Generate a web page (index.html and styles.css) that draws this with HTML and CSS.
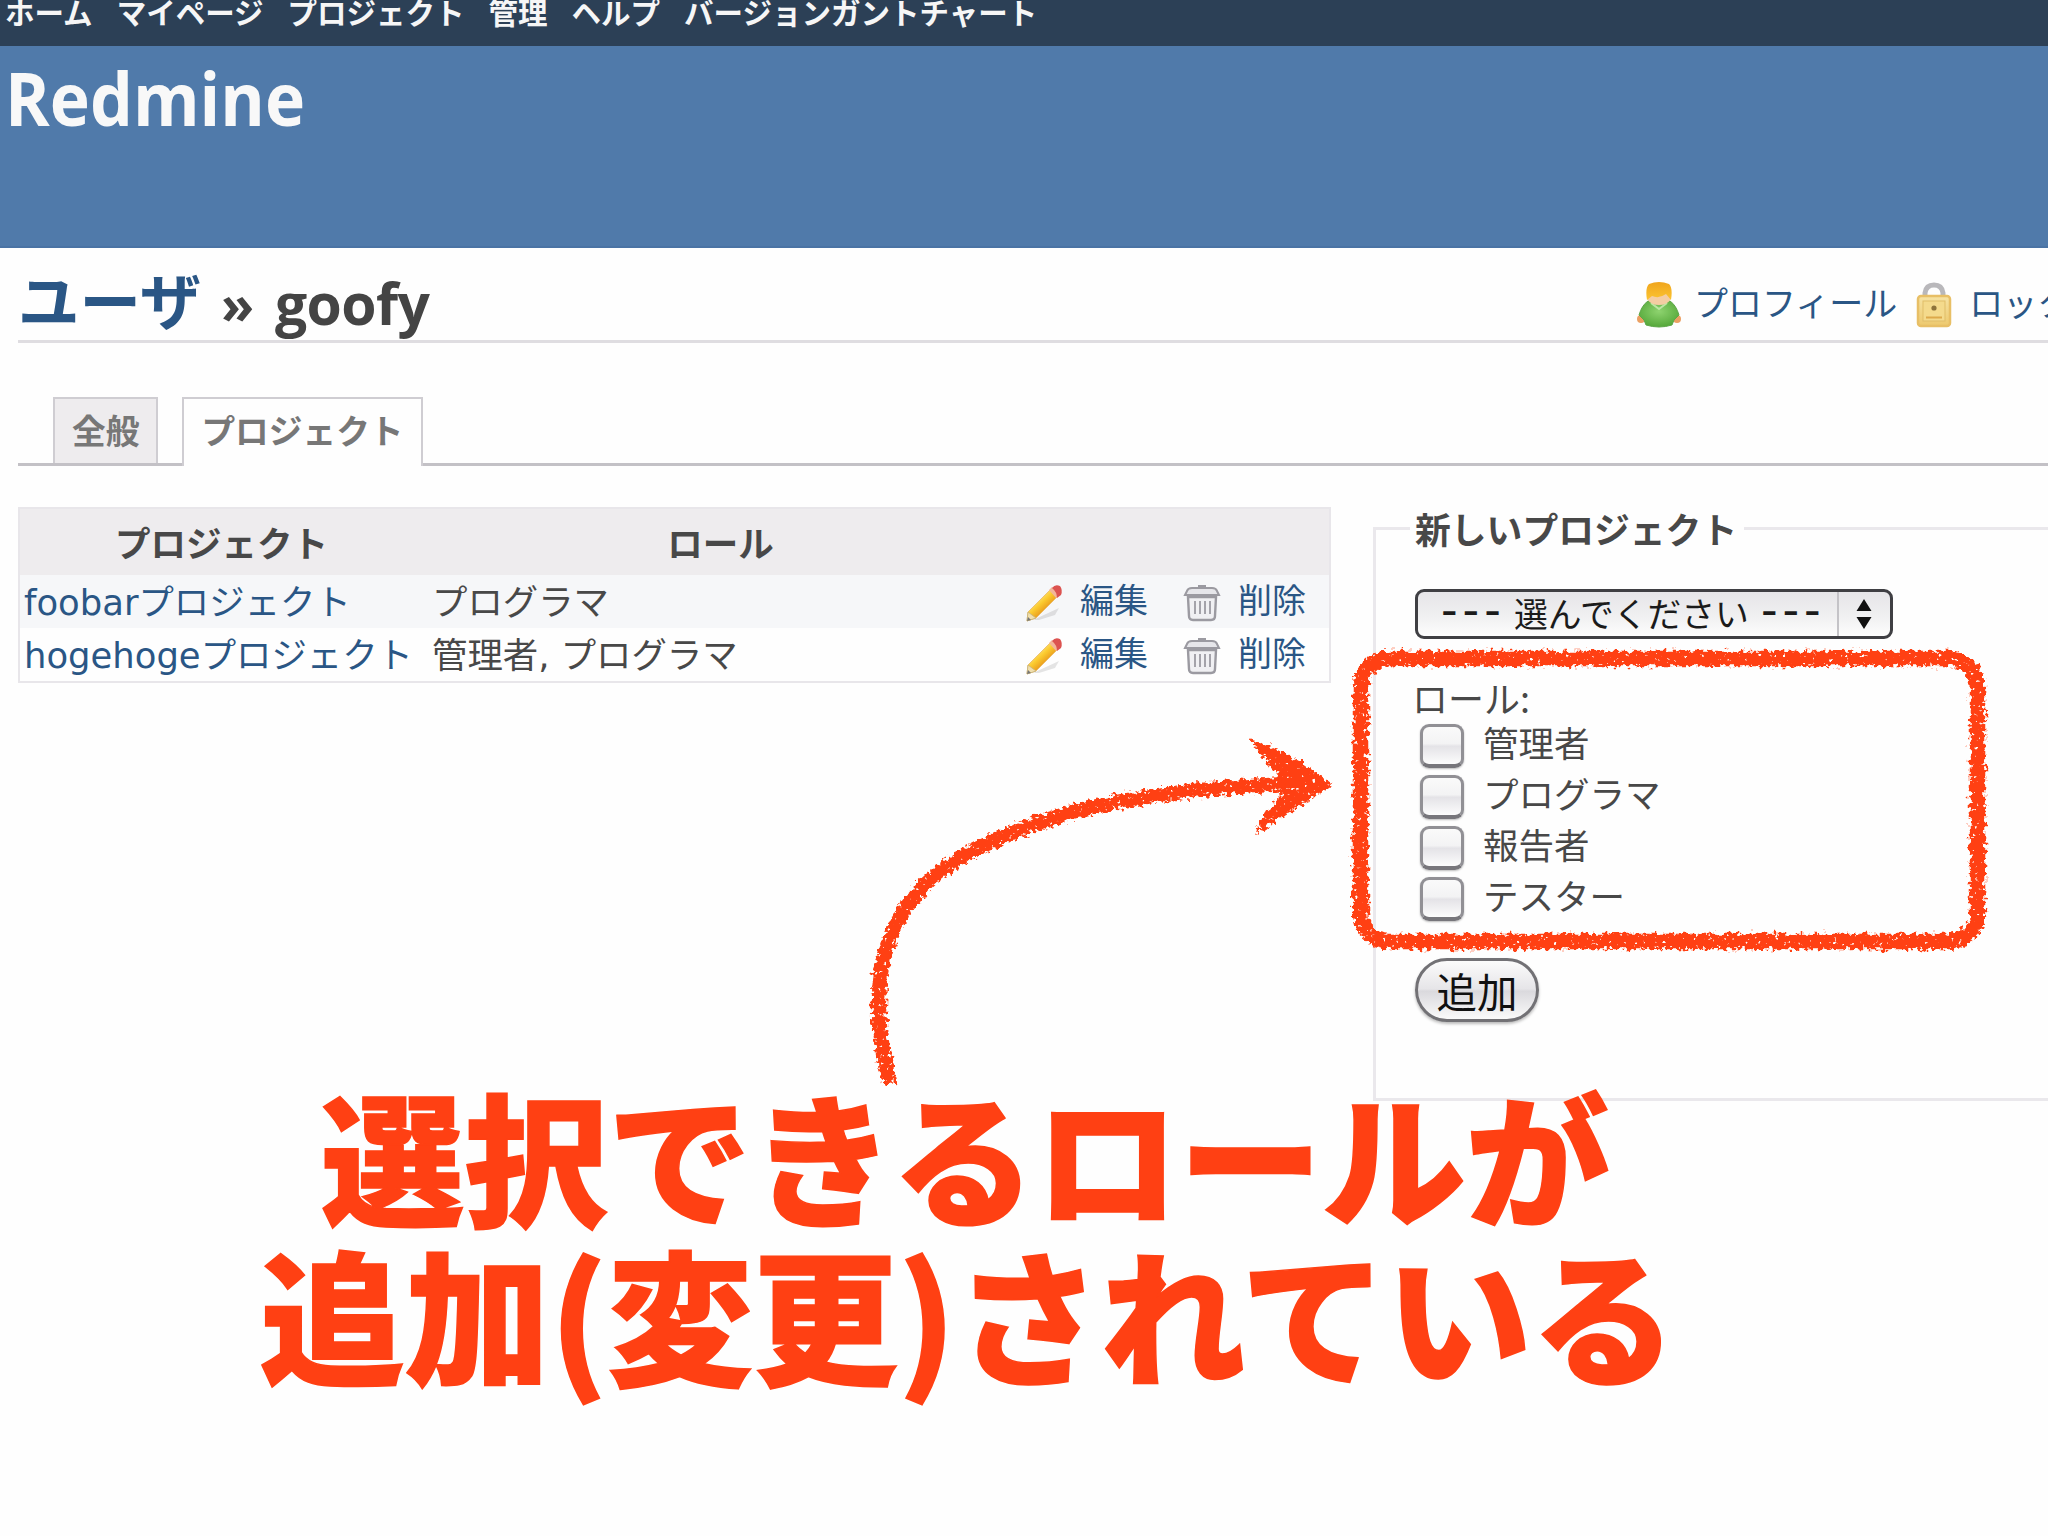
FILE: index.html
```html
<!DOCTYPE html>
<html lang="ja">
<head>
<meta charset="utf-8">
<title>ユーザ » goofy - Redmine</title>
<link rel="stylesheet" href="styles.css">
</head>
<body>
<svg class="defs" width="0" height="0" aria-hidden="true">
  <defs>
    <linearGradient id="pencil-body" gradientUnits="userSpaceOnUse" x1="12" y1="12" x2="23" y2="24">
      <stop offset="0" stop-color="#ffe98a"/><stop offset=".5" stop-color="#fbcb2f"/><stop offset="1" stop-color="#e99a1c"/>
    </linearGradient>
    <linearGradient id="hair" x1="0" y1="0" x2="0" y2="1">
      <stop offset="0" stop-color="#f0a51d"/><stop offset="1" stop-color="#fbc431"/>
    </linearGradient>
    <radialGradient id="shirt" cx=".5" cy=".4" r=".6">
      <stop offset="0" stop-color="#8ed36f"/><stop offset="1" stop-color="#55a83a"/>
    </radialGradient>
    <linearGradient id="brass" x1="0" y1="0" x2="0" y2="1">
      <stop offset="0" stop-color="#f6e3a4"/><stop offset="1" stop-color="#edc96e"/>
    </linearGradient>
    <symbol id="icon-edit" viewBox="0 0 38 38">
      <path d="M8 36 34 24 30 31 14 36Z" fill="#000" opacity=".1"/>
      <path d="M3 28 25 6 32 13 11 34 2 37Z" fill="url(#pencil-body)" stroke="#e8b866" stroke-width=".8"/>
      <path d="M3 28 11 34 2 37Z" fill="#f1dfae" stroke="#c5b27a" stroke-width=".8"/>
      <path d="M2 37 3 33 6 36Z" fill="#777"/>
      <path d="M24 6 27 3 34 10 31 14Z" fill="#f3b69a"/>
      <path d="M27 4Q30 0 35 2 38 6 36 11L32 14Q32 8 27 4Z" fill="#dc5350"/>
    </symbol>
    <symbol id="icon-del" viewBox="0 0 38 38">
      <path d="M5 13H33L32 32Q32 36 28 36H10Q6 36 6 32Z" fill="#f0f0f3" stroke="#9b9aa1" stroke-width="2.4"/>
      <path d="M4 7Q5 4 9 4H29Q33 4 34 7L36 11H2Z" fill="#e6e6ea" stroke="#9b9aa1" stroke-width="2"/>
      <path d="M16 4V2H22V4" fill="none" stroke="#9b9aa1" stroke-width="2"/>
      <path d="M12 17V30M17 17V30M22 17V30M27 17V30" stroke="#a4a3aa" stroke-width="2"/>
    </symbol>
    <symbol id="icon-user" viewBox="0 0 44 46">
      <circle cx="4" cy="37" r="4" fill="#eba063"/><circle cx="40" cy="37" r="4" fill="#eba063"/>
      <path d="M2 33Q5 23 11 19H33Q39 23 42 33L37 38 35 43Q22 47 9 43L7 38Z" fill="url(#shirt)" stroke="#5da648" stroke-width="1"/>
      <path d="M14 21 22 27 30 21" fill="none" stroke="#bce6a4" stroke-width="2"/>
      <path d="M10 12H34V17Q30 23 22 23 14 23 10 17Z" fill="#f4cda2"/>
      <path d="M10 18Q8 6 12 2 22-2 32 2 36 6 34 18L29 12Q22 17 15 14Z" fill="url(#hair)"/>
    </symbol>
    <symbol id="icon-lock" viewBox="0 0 36 46">
      <path d="M9 17V11Q10 3 18 3 26 3 27 11V17" fill="none" stroke="#b9b8bb" stroke-width="5"/>
      <rect x="2" y="14" width="32" height="30" rx="3" fill="url(#brass)" stroke="#e8bf66" stroke-width="2.5"/>
      <rect x="7" y="19" width="22" height="20" fill="#f4da8c" stroke="#dfbd68" stroke-width="1"/>
      <circle cx="18" cy="26" r="2.6" fill="#8d733b"/>
      <path d="M10 35.500H26" stroke="#dda94a" stroke-width="2"/>
    </symbol>
  </defs>
</svg>

<nav class="top-menu">
  <a>ホーム</a><a>マイページ</a><a>プロジェクト</a><a>管理</a><a>ヘルプ</a><a>バージョンガントチャート</a>
</nav>
<header class="header"><h1 class="brand">Redmine</h1></header>

<main class="content">
  <div class="title-row">
    <h2 class="title"><a class="title-user">ユーザ</a><span class="title-sep">»</span><span class="title-name">goofy</span></h2>
    <div class="contextual">
      <svg class="icon-user"><use href="#icon-user"/></svg><a>プロフィール</a>
      <svg class="icon-lock"><use href="#icon-lock"/></svg><a>ロック</a>
    </div>
  </div>

  <div class="tabs">
    <a class="tab">全般</a>
    <a class="tab selected">プロジェクト</a>
  </div>

  <div class="columns">
    <table class="list">
      <colgroup><col class="col-project"><col class="col-role"><col class="col-actions"></colgroup>
      <thead><tr><th>プロジェクト</th><th>ロール</th><th></th></tr></thead>
      <tbody>
        <tr class="odd">
          <td><a>foobarプロジェクト</a></td><td>プログラマ</td>
          <td><div class="actions"><svg><use href="#icon-edit"/></svg><a>編集</a><svg class="trash"><use href="#icon-del"/></svg><a>削除</a></div></td>
        </tr>
        <tr>
          <td><a>hogehogeプロジェクト</a></td><td>管理者, プログラマ</td>
          <td><div class="actions"><svg><use href="#icon-edit"/></svg><a>編集</a><svg class="trash"><use href="#icon-del"/></svg><a>削除</a></div></td>
        </tr>
      </tbody>
    </table>

    <fieldset class="new-project">
      <legend>新しいプロジェクト</legend>
      <div class="select">
        <span class="select-text"><i>---</i>選んでください<i>---</i></span>
        <span class="select-arrows"><svg width="16" height="30" viewBox="0 0 16 30"><path d="M8 0 15.500 12H.5ZM8 30 .5 18H15.500Z" fill="#111"/></svg></span>
      </div>
      <p class="roles-label">ロール:</p>
      <div class="roles">
        <label><span class="box"></span>管理者</label>
        <label><span class="box"></span>プログラマ</label>
        <label><span class="box"></span>報告者</label>
        <label><span class="box"></span>テスター</label>
      </div>
      <button class="add" type="button">追加</button>
    </fieldset>
  </div>
</main>

<svg class="marks" viewBox="0 0 2048 1536" aria-hidden="true">
  <defs>
    <filter id="crayon" filterUnits="userSpaceOnUse" x="840" y="620" width="1180" height="490" color-interpolation-filters="sRGB">
      <feTurbulence type="fractalNoise" baseFrequency=".22" numOctaves="2" seed="4" result="n"/>
      <feDisplacementMap in="SourceGraphic" in2="n" scale="11" xChannelSelector="R" yChannelSelector="G" result="d"/>
      <feTurbulence type="fractalNoise" baseFrequency=".24" numOctaves="2" seed="11"/>
      <feColorMatrix values="0 0 0 0 0  0 0 0 0 0  0 0 0 0 0  10 0 0 0 -2.2" result="holes"/>
      <feComposite in="d" in2="holes" operator="in"/>
    </filter>
  </defs>
  <g filter="url(#crayon)" fill="none" stroke="#ff4013">
    <rect x="1360.500" y="658.500" width="617" height="283" rx="29" stroke-width="15.500"/>
    <path d="M890 1084C878 1040 874 985 887 947 907 885 955 850 1053 818 1110 800 1190 788 1292 784" stroke-width="14.500"/>
    <path d="M1255 743Q1280 752 1302 765L1329 784 1298 805Q1275 818 1259 830 1265 812 1284 797L1279 773Q1267 762 1255 743Z" fill="#ff4013" stroke-width="4"/>
  </g>
</svg>
<p class="note"><span>選択できるロールが</span><span class="note-wide">追加(変更)されている</span></p>
</body>
</html>
```
FILE: styles.css
```css
* { box-sizing: border-box; }
html, body { margin: 0; }
body {
  position: relative;
  width: 2048px;
  height: 1536px;
  overflow: hidden;
  background: #fefefe;
  color: #484848;
  font-family: "DejaVu Sans", "Noto Sans CJK JP", sans-serif;
  font-size: 35.400px;
  line-height: 52px;
}
p, h1, h2 { margin: 0; }
a { color: #2a5685; }
.defs { position: absolute; }

.top-menu {
  display: flex;
  gap: 24px;
  height: 46px;
  padding-left: 5px;
  background: #2c4056;
  font: bold 29.500px/22px "Noto Sans CJK JP", sans-serif;
  white-space: nowrap;
}
.top-menu a { color: #f6f6f6; }
.header { height: 202px; padding: 2px 0 0 5px; background: #507aaa; border-bottom: 2px solid #4a73a4; }
.brand {
  color: #f8f8f8;
  font: bold 73px/100px "Open Sans", sans-serif;
  transform: scaleX(.93);
  transform-origin: 0 0;
}

.content { padding-left: 18px; }
.title-row {
  display: flex;
  justify-content: space-between;
  height: 95px;
  border-bottom: 3px solid #dfdde1;
}
.title { display: flex; color: #444; font: bold 57px/110px "Open Sans", sans-serif; white-space: nowrap; }
.title-user { width: 203px; font: bold 61.500px/102px "Noto Sans CJK JP", sans-serif; }
.title-sep { width: 54px; font-size: 54px; }
.title-name { letter-spacing: -.6px; }
.contextual {
  display: flex;
  flex: none;
  width: 411px;
  padding-top: 34px;
  font: 34px/44px "Noto Sans CJK JP", sans-serif;
  white-space: nowrap;
}
.contextual a { line-height: 39px; }
.icon-user { flex: none; width: 44px; height: 46px; margin-right: 13px; }
.icon-lock { flex: none; width: 36px; height: 46px; margin: 0 17px 0 19px; }

.tabs {
  display: flex;
  align-items: flex-end;
  gap: 24px;
  height: 123px;
  padding-left: 35px;
  border-bottom: 3px solid #c3c1c6;
}
.tab {
  height: 66px;
  padding: 0 17px;
  border: 2px solid #cfcdd2;
  border-bottom: 0;
  background: #eeecee;
  color: #777;
  font: bold 33.700px/62px "Noto Sans CJK JP", sans-serif;
  white-space: nowrap;
}
.tab.selected { height: 69px; margin-bottom: -3px; padding: 0 17px; background: #fefefe; }

.columns { display: flex; align-items: flex-start; gap: 42px; padding-top: 41px; }
.list {
  flex: none;
  width: 1313px;
  table-layout: fixed;
  border-collapse: collapse;
  border: 2px solid #e8e6ea;
  white-space: nowrap;
}
.col-project { width: 406px; }
.col-role { width: 593px; }
.list th { height: 67px; padding: 0 2px 0 0; background: #eeecee; font: bold 35.500px/66px "Noto Sans CJK JP", sans-serif; }
.list td { height: 53px; padding: 2px 5px 0 4px; line-height: 51px; }
.list td + td { padding-left: 7px; }
.odd { background: #f6f7f9; }
.actions { display: flex; align-items: center; height: 51px; font-family: "Noto Sans CJK JP", sans-serif; font-size: 34px; line-height: 46px; }
.actions a { height: 53px; }
.actions svg { width: 38px; height: 38px; margin-left: 0; margin-right: 17px; }
.actions .trash { margin-left: 35px; margin-right: 17px; }

.new-project {
  flex: none;
  width: 720px;
  height: 599px;
  margin: -5px 0 0;
  padding: 35px 0 0 39px;
  border: 3px solid #eae8ec;
}
.new-project legend { padding: 0 7px 0 5px; margin-left: -5px; font: bold 35.800px/52px "Noto Sans CJK JP", sans-serif; }
.select {
  display: flex;
  width: 478px;
  height: 50px;
  border: 3px solid #3f3f43;
  border-radius: 9px;
  background: linear-gradient(#e6e5e8, #f0f0f1 55%, #fdfdfd);
  color: #1b1b1b;
  font: 33.800px/41px "Noto Sans CJK JP", sans-serif;
  white-space: nowrap;
}
.select-text { display: flex; flex: 1; padding-left: 23px; gap: 12px; }
.select-text i { display: block; width: 61px; font: 46px/36px "DejaVu Sans", sans-serif; letter-spacing: 5px; }
.select-arrows { display: flex; align-items: center; justify-content: center; width: 53px; padding-right: 1px; border-left: 2px solid #c4c3c7; }
.roles-label { margin: 34px 0 0 -3px; font: 36px/48px "Noto Sans CJK JP", sans-serif; }
.roles { display: flex; flex-direction: column; }
.roles label { display: flex; align-items: flex-start; gap: 19px; height: 51px; padding-left: 5px; font: 35.500px/41px "Noto Sans CJK JP", sans-serif; }
.box {
  width: 44px;
  height: 44px;
  margin-top: 3px;
  border: 3px solid #919095;
  border-bottom: 4px solid #77767b;
  border-radius: 9px;
  background: linear-gradient(#fafafa, #f3f3f4 45%, #e4e3e7 52%, #fcfcfc);
  box-shadow: 0 1px 2px #bbb;
}
.add {
  display: block;
  width: 124px;
  height: 64px;
  margin-top: 33px;
  padding: 0;
  border: 3px solid #727175;
  border-radius: 32px;
  background: linear-gradient(#fbfbfb, #e6e5e8 48%, #dad9dd 52%, #fafafa);
  box-shadow: 0 2px 3px #bbb;
  color: #111;
  font: 40.500px/60px "Noto Sans CJK JP", sans-serif;
}

.marks { position: absolute; left: 0; top: 0; width: 2048px; height: 1536px; }
.note {
  position: absolute;
  left: 0;
  top: 1074px;
  width: 1930px;
  color: #ff4013;
  font: 900 143.500px/159px "Noto Sans CJK JP", sans-serif;
  text-align: center;
  white-space: nowrap;
  -webkit-text-stroke: 1.500px #ff4013;
}
.note span { display: block; }
.note .note-wide { padding-left: 6px; font-size: 145px; }
```
